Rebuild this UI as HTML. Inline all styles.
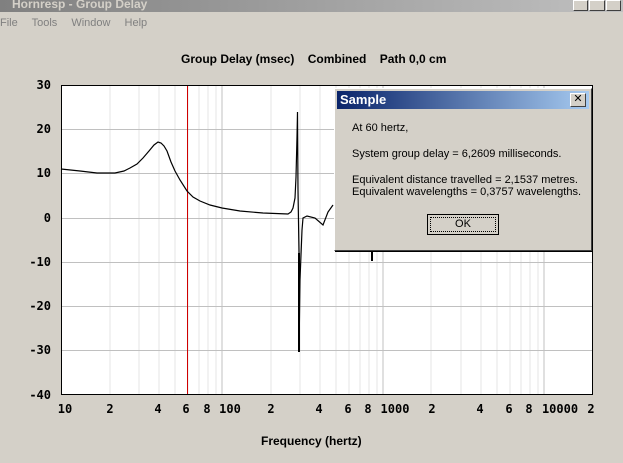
<!DOCTYPE html>
<html><head><style>
body{margin:0;width:623px;height:463px;background:#d4d0c8;position:relative;overflow:hidden;font-family:"Liberation Sans",sans-serif}
.tb{position:absolute;left:0;top:-8px;width:623px;height:20px;background:linear-gradient(90deg,#808080,#c0c0c0);}
.tb span{position:absolute;left:12px;top:5px;color:#d4d0c8;font-weight:bold;font-size:12px}
.menu{position:absolute;top:17px;left:0;font-size:11px;color:#808080}
.menu span{margin-right:11px}
.b{position:absolute;font-weight:bold;font-size:12px;color:#000}
.yl{position:absolute;right:572px;font-weight:bold;font-size:12px;font-family:"DejaVu Sans Mono","Liberation Mono",monospace}
.xl{position:absolute;top:402px;font-weight:bold;font-size:12px;font-family:"DejaVu Sans Mono","Liberation Mono",monospace;transform:translateX(-50%)}
.dlg{position:absolute;left:334px;top:88px;width:256px;height:161px;background:#d4d0c8;border:1px solid;border-color:#fff #404040 #404040 #fff;box-shadow:1px 1px 0 #000}
.dt{height:18px;margin:2px;background:linear-gradient(90deg,#0a246a,#a6caf0);color:#fff;font-weight:bold;font-size:13px;line-height:18px;padding-left:3px}
.x{position:absolute;right:5px;top:4px;width:14px;height:12px;background:#d4d0c8;border:1px solid;border-color:#fff #404040 #404040 #fff;font-size:11px;line-height:11px;text-align:center;color:#000}
.dl{position:absolute;left:17px;font-size:11px;color:#000}
.ok{position:absolute;left:92px;top:125px;width:72px;height:21px;border:1px solid #000;box-sizing:border-box;background:#d4d0c8;font-size:11px;text-align:center;line-height:19px;outline:1px dotted #000;outline-offset:-4px}
</style></head><body>
<div class="tb"><span>Hornresp - Group Delay</span>
<div style="position:absolute;right:2px;top:8px;width:48px;height:11px;display:flex;gap:1px"><div style="flex:1;background:#d4d0c8;border:1px solid #fff;border-right-color:#404040;border-bottom-color:#404040"></div><div style="flex:1;background:#d4d0c8;border:1px solid #fff;border-right-color:#404040;border-bottom-color:#404040"></div><div style="flex:1;background:#d4d0c8;border:1px solid #fff;border-right-color:#404040;border-bottom-color:#404040"></div></div></div>
<div class="menu"><span>File</span> <span>Tools</span> <span>Window</span> <span>Help</span></div>
<div class="b" style="left:181px;top:52px">Group Delay (msec)&nbsp;&nbsp;&nbsp; Combined&nbsp;&nbsp;&nbsp; Path 0,0 cm</div>
<svg style="position:absolute;left:0;top:0" width="623" height="463">
<rect x="61.5" y="85.5" width="531" height="309" fill="#fff" stroke="#000"/>
<g stroke="#e6e6e6">
<path d="M110 86V394M139 86V394M159 86V394M175 86V394M188 86V394M199 86V394M208 86V394M216 86V394M271 86V394M300 86V394M320 86V394M336 86V394M349 86V394M360 86V394M369 86V394M377 86V394M431 86V394M461 86V394M481 86V394M497 86V394M510 86V394M521 86V394M530 86V394M538 86V394"/></g>
<g stroke="#c0c0c0"><path d="M222 86V394M383 86V394M544 86V394M62 129.5H592M62 173.5H592M62 218.5H592M62 262.5H592M62 306.5H592M62 350.5H592"/></g>
<path d="M187.5 86V394" stroke="#d00000"/>
<polyline fill="none" stroke="#000" stroke-width="1.2" points="61,169 80,171 97,173 115,173 124,171 130,168 137,164 143,158 149,151 154,145 158,142 161,143 164,146 167,151 171,162 175,171 180,180 187,191 193,197 200,201 210,205 222,208 240,211 263,213 288,214 291,212 293,208 295,198 296,177 297,137 297.5,112 298,190 299,253 299,352 300,280 302,230 303,218 307,216 315,218 323,225 328,212 333,205"/>
<path d="M299 253V352" stroke="#000" stroke-width="2"/>
<path d="M372 250V261" stroke="#000" stroke-width="2"/>
</svg>
<div class="yl" style="top:78px">30</div><div class="yl" style="top:122px">20</div><div class="yl" style="top:166px">10</div><div class="yl" style="top:211px">0</div><div class="yl" style="top:255px">-10</div><div class="yl" style="top:299px">-20</div><div class="yl" style="top:343px">-30</div><div class="yl" style="top:388px">-40</div>
<div class="xl" style="left:65px">10</div><div class="xl" style="left:110px">2</div><div class="xl" style="left:158px">4</div><div class="xl" style="left:186px">6</div><div class="xl" style="left:207px">8</div><div class="xl" style="left:230px">100</div><div class="xl" style="left:271px">2</div><div class="xl" style="left:319px">4</div><div class="xl" style="left:348px">6</div><div class="xl" style="left:368px">8</div><div class="xl" style="left:395px">1000</div><div class="xl" style="left:432px">2</div><div class="xl" style="left:480px">4</div><div class="xl" style="left:509px">6</div><div class="xl" style="left:529px">8</div><div class="xl" style="left:560px">10000</div><div class="xl" style="left:591px">2</div>
<div class="b" style="left:261px;top:434px">Frequency (hertz)</div>
<div class="dlg"><div class="dt">Sample</div><div class="x">✕</div>
<div class="dl" style="top:33px">At 60 hertz,</div>
<div class="dl" style="top:59px">System group delay = 6,2609 milliseconds.</div>
<div class="dl" style="top:85px">Equivalent distance travelled = 2,1537 metres.</div>
<div class="dl" style="top:97px">Equivalent wavelengths = 0,3757 wavelengths.</div>
<div class="ok">OK</div></div>
</body></html>
